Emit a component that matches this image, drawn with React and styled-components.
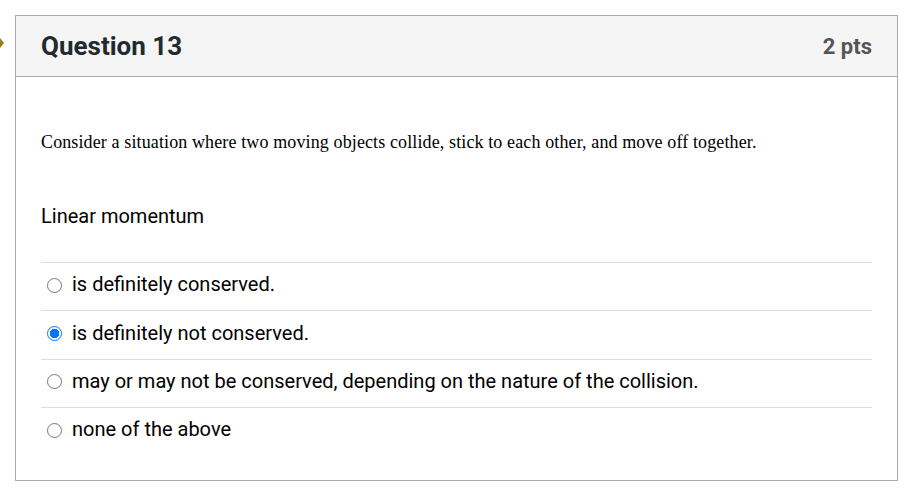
import React from 'react';
import styled, { createGlobalStyle } from 'styled-components';

const GlobalStyle = createGlobalStyle`
  html, body {
    margin: 0;
    padding: 0;
    background: #fff;
  }
  body {
    font-family: Roboto, "Liberation Sans", sans-serif;
    color: #2d3b45;
  }
`;

const answers = [
  'is definitely conserved.',
  'is definitely not conserved.',
  'may or may not be conserved, depending on the nature of the collision.',
  'none of the above',
];

function App() {
  const selected = 1;
  return (
    <Page>
      <GlobalStyle />
      <Card>
        <Marker />
        <Header>
          <Title>Question 13</Title>
          <Points>2 pts</Points>
        </Header>
        <Body>
          <Prompt>
            Consider a situation where two moving objects collide, stick to each other, and move off together.
          </Prompt>
          <Lead>Linear momentum</Lead>
          <Answers>
            {answers.map((a, i) => (
              <Answer key={i}>
                <Radio $checked={i === selected} />
                <AnswerText>{a}</AnswerText>
              </Answer>
            ))}
          </Answers>
        </Body>
      </Card>
    </Page>
  );
}

export default App;

const Page = styled.div`
  padding: 15px 10px 0 15px;
`;

const Card = styled.div`
  position: relative;
  width: 883px;
  height: 466px;
  box-sizing: border-box;
  border: 1px solid #aaaaaa;
`;

const Marker = styled.div`
  position: absolute;
  left: -16px;
  top: 22px;
  width: 0;
  height: 0;
  border-top: 5px solid transparent;
  border-bottom: 5px solid transparent;
  border-left: 4px solid #9a7b1c;
`;

const Header = styled.div`
  display: flex;
  justify-content: space-between;
  align-items: center;
  height: 60px;
  padding: 0 25px;
  background: #f5f5f5;
  border-bottom: 1px solid #aaaaaa;
`;

const Title = styled.div`
  font-size: 26px;
  font-weight: 700;
  color: #222a30;
`;

const Points = styled.div`
  font-size: 22px;
  font-weight: 700;
  color: #555555;
`;

const Body = styled.div`
  padding: 53px 25px 0 25px;
`;

const Prompt = styled.p`
  margin: 0;
  font-family: "Liberation Serif", "Times New Roman", serif;
  font-size: 18px;
  letter-spacing: 0.12px;
  color: #000;
  line-height: 24px;
`;

const Lead = styled.div`
  margin-top: 49px;
  font-size: 20px;
  color: #000;
  line-height: 26px;
`;

const Answers = styled.div`
  margin-top: 33px;
`;

const Answer = styled.div`
  display: flex;
  align-items: center;
  height: 48.4px;
  padding-bottom: 5px;
  box-sizing: border-box;
  border-top: 1px solid #dddddd;
`;

const Radio = styled.span`
  box-sizing: border-box;
  width: 15px;
  height: 15px;
  margin: 2px 10px 0 6px;
  border-radius: 50%;
  border: 1px solid ${p => (p.$checked ? '#0075ff' : '#767676')};
  background: ${p => (p.$checked ? 'radial-gradient(circle, #0075ff 0 4.5px, #fff 5px)' : '#fff')};
  flex-shrink: 0;
`;

const AnswerText = styled.span`
  font-size: 20px;
  color: #000;
`;
